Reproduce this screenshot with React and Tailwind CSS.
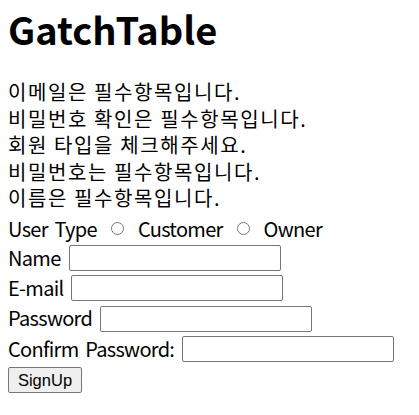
export default function App() {
  const errors = [
    '이메일은 필수항목입니다.',
    '비밀번호 확인은 필수항목입니다.',
    '회원 타입을 체크해주세요.',
    '비밀번호는 필수항목입니다.',
    '이름은 필수항목입니다.',
  ];

  const field = (label, type = 'text') => (
    <div className="flex h-[30.3px] items-center gap-[8px]">
      <label className="tracking-[-0.7px] [word-spacing:3px]">{label}</label>
      <input
        type={type}
        className="h-[26px] w-[212px] rounded-[2px] border border-[#767676] bg-white px-[2px]"
      />
    </div>
  );

  const radio = <span className="mx-[14px] inline-block h-[13px] w-[13px] rounded-full border border-[#767676] bg-white" />;

  return (
    <div
      className="min-h-screen bg-white px-2 text-[20px] leading-[26.6px] text-black"
      style={{ fontFamily: '"Noto Sans CJK KR", sans-serif' }}
    >
      <h1 className="text-[38px] font-bold leading-normal">GatchTable</h1>

      <div className="mt-[22px] tracking-[1.6px]">
        {errors.map((msg) => (
          <div key={msg}>{msg}</div>
        ))}
      </div>

      <form className="mt-[3px]">
        <div className="flex h-[28px] items-center tracking-[-0.7px] [word-spacing:3px]">
          <span>User Type</span>
          {radio}
          <span>Customer</span>
          {radio}
          <span>Owner</span>
        </div>
        {field('Name')}
        {field('E-mail', 'email')}
        {field('Password', 'password')}
        {field('Confirm Password:', 'password')}
        <button
          type="button"
          className="mt-[3px] h-[26px] w-[74px] rounded-[2px] border border-[#767676] bg-[#efefef] text-[16.5px] leading-none"
          style={{ fontFamily: '"Liberation Sans", Arial, sans-serif' }}
        >
          SignUp
        </button>
      </form>
    </div>
  );
}
